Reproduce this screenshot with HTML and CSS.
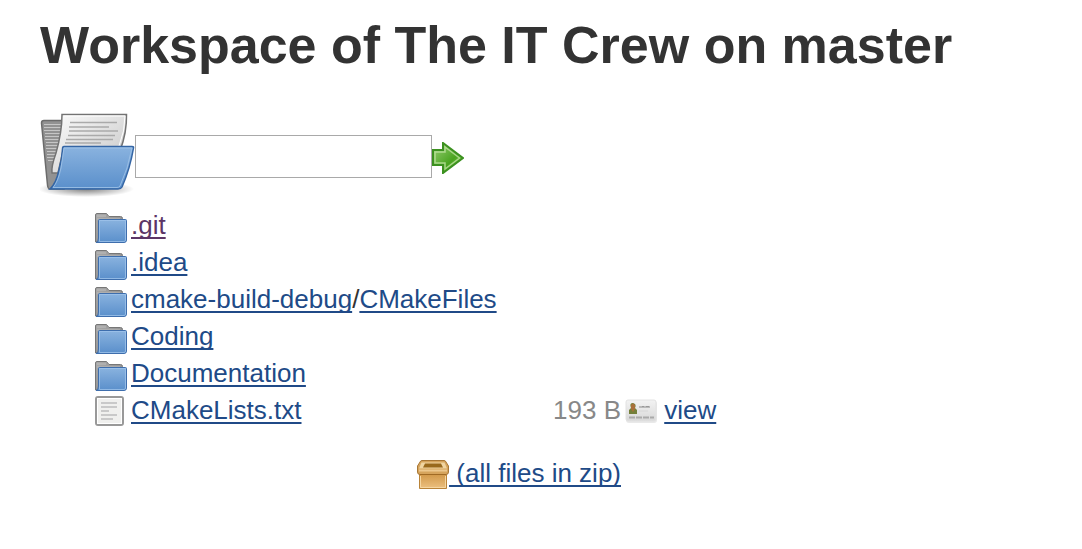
FILE: index.html
```html
<!DOCTYPE html>
<html lang="en">
<head>
<meta charset="utf-8">
<title>Workspace of The IT Crew on master</title>
<link rel="stylesheet" href="styles.css">
</head>
<body>
<svg class="defs" width="0" height="0" aria-hidden="true">
  <defs>
    <linearGradient id="blue" x1="0" y1="0" x2="0" y2="1"><stop offset="0" stop-color="#8ab3df"/><stop offset="1" stop-color="#5a8fcb"/></linearGradient>
    <linearGradient id="grey" x1="0" y1="0" x2="1" y2="1"><stop offset="0" stop-color="#aaa"/><stop offset="1" stop-color="#858585"/></linearGradient>
    <linearGradient id="paper" x1="0" y1="0" x2="1" y2="1"><stop offset="0" stop-color="#fcfcfc"/><stop offset="1" stop-color="#c4c4c4"/></linearGradient>
    <linearGradient id="green" x1="0" y1="0" x2="1" y2="1"><stop offset="0" stop-color="#9bd078"/><stop offset=".6" stop-color="#4aa420"/><stop offset="1" stop-color="#80cc4c"/></linearGradient>
    <linearGradient id="card" x1="0" y1="0" x2="0" y2="1"><stop offset="0" stop-color="#f3f3f3"/><stop offset="1" stop-color="#d8d8d8"/></linearGradient>
    <linearGradient id="box" x1="0" y1="0" x2="0" y2="1"><stop offset="0" stop-color="#cf9544"/><stop offset="1" stop-color="#ecc080"/></linearGradient>
    <radialGradient id="shadow"><stop offset="0" stop-color="#000" stop-opacity=".5"/><stop offset="1" stop-color="#000" stop-opacity="0"/></radialGradient>
    <symbol id="folder" viewBox="0 0 32 32">
      <path d="M.5 31V4Q.5 2.500 2 2.500H11.500L14 5.500H25.500Q27.500 5.500 27.500 7.500V31Z" fill="url(#grey)" stroke="#777"/>
      <path d="M2 5H11M2 8H25" stroke="#bdbdbd" fill="none"/>
      <path d="M1 31.500Q3.500 31 3.500 27V9.500Q3.500 8.500 4.500 8.500H30.500Q31.500 8.500 31.500 9.500V29Q31.500 31.500 29 31.500Z" fill="url(#blue)" stroke="#3e6ead"/>
      <path d="M4.500 28V9.500H30.500V29Q30.500 30.500 29 30.500H4.500Z" fill="none" stroke="#9fc3ea" stroke-opacity=".8"/>
    </symbol>
  </defs>
</svg>
<main class="workspace">
  <h1 class="title">Workspace of The IT Crew on master</h1>
  <form class="path-form">
    <svg class="folder-large" viewBox="0 0 95 96" aria-hidden="true">
      <ellipse cx="46" cy="84" rx="48" ry="8" fill="url(#shadow)"/>
      <path d="M1.500 18Q1.500 15.500 4 15.500H24V84H10Q8 84 7.500 80Z" fill="#929292" stroke="#6b6b6b" stroke-width="1.500"/>
      <path d="M4 19.500H22M4 22.500H22M4 25.500H22M5 28.500H22M5 31.500H22M5 34.500H22M6 37.500H22M6 40.500H20M6 43.500H19M7 46.500H18M7 49.500H17M7 52.500H15M8 55.500H14" stroke="#c6c6c6"/>
      <path d="M22 9.500H86.500Q87 27 80 46H23L18 68H12Q11 62 16 48Q22 27 22 9.500Z" fill="url(#paper)" stroke="#737373" stroke-width="1.500"/>
      <path d="M23.500 11H85Q85 26 79 41" stroke="#fff" fill="none"/>
      <path d="M30 17.500H77M29 22H69M29 26H78M28 30.500H75M26 34.500H73M25 38H61" stroke="#aaa" stroke-width="1.500"/>
      <path d="M24 41.500H92Q94 41.500 93.500 43Q90 64 82 82Q81 84 78 84H10Q16 79 19 65Q22 54 22.500 44Q22.500 41.500 24 41.500Z" fill="url(#blue)" stroke="#3465a4" stroke-width="1.500"/>
      <path d="M13 82.500Q18 77 21 63L24 43H92Q88 64 80 81Q79 82.500 77 82.500Z" fill="none" stroke="#a4c5e9" stroke-opacity=".8"/>
    </svg>
    <div class="path-controls">
      <input class="path-input" type="text" aria-label="Path">
      <button class="go" type="submit" aria-label="Go">
        <svg class="icon" viewBox="0 0 32 32" aria-hidden="true">
          <path d="M1 8H11V1L31 16L11 31V23H1Z" fill="url(#green)" stroke="#3c9120" stroke-width="2"/>
          <path d="M3 21V10H13V5L27.500 16L13 27V21Z" fill="none" stroke="#c4e6a8" stroke-width="1.500" stroke-opacity=".75"/>
        </svg>
      </button>
    </div>
  </form>
  <table class="files">
    <tbody>
      <tr><td class="icon-cell"><svg class="icon" aria-hidden="true"><use href="#folder"/></svg></td><td class="name"><a class="link visited" href="#git">.git</a></td><td></td><td></td></tr>
      <tr><td class="icon-cell"><svg class="icon" aria-hidden="true"><use href="#folder"/></svg></td><td class="name"><a class="link" href="#idea">.idea</a></td><td></td><td></td></tr>
      <tr><td class="icon-cell"><svg class="icon" aria-hidden="true"><use href="#folder"/></svg></td><td class="name"><a class="link" href="#cmake-build-debug">cmake-build-debug</a>/<a class="link" href="#cmakefiles">CMakeFiles</a></td><td></td><td></td></tr>
      <tr><td class="icon-cell"><svg class="icon" aria-hidden="true"><use href="#folder"/></svg></td><td class="name"><a class="link" href="#coding">Coding</a></td><td></td><td></td></tr>
      <tr><td class="icon-cell"><svg class="icon" aria-hidden="true"><use href="#folder"/></svg></td><td class="name"><a class="link" href="#documentation">Documentation</a></td><td></td><td></td></tr>
      <tr>
        <td class="icon-cell"><svg class="icon" viewBox="0 0 32 32" aria-hidden="true">
          <rect x="1" y="1" width="27" height="28" rx="2" fill="#f0f0ee" stroke="#999" stroke-width="2"/>
          <rect x="2.500" y="2.500" width="24" height="25" fill="none" stroke="#fff"/>
          <path d="M6 7H22M6 11H22M6 15H14M6 19H22M6 23H18" stroke="#c9c9c9" stroke-width="2"/>
        </svg></td>
        <td class="name"><a class="link" href="#cmakelists">CMakeLists.txt</a></td>
        <td class="size">193 B</td>
        <td class="view"><a class="view-link" href="#view"><svg class="icon" viewBox="0 0 32 32" aria-hidden="true">
          <rect x="1" y="5" width="31" height="22" rx="3" fill="#e9e9e9"/>
          <rect x="1" y="4" width="30" height="21" rx="2" fill="url(#card)" stroke="#e2e2e2"/>
          <path d="M4 18V14L6 12Q4 7 8 7Q12 8 10 12L12 14V18Z" fill="#74803a"/>
          <path d="M6 9Q8 6 10 9V13L8 16L6 13Z" fill="#a9703a"/>
          <path d="M14 11H25" stroke="#bababa" stroke-width="2"/>
          <path d="M17 10.500H19M21 10.500H24" stroke="#999"/>
          <path d="M14 15H23" stroke="#d6d6d6"/>
          <path d="M4 21.500H29" stroke="#aaa" stroke-width="2" stroke-dasharray="6 1"/>
        </svg></a> <a class="link" href="#view">view</a></td>
      </tr>
    </tbody>
    <tfoot>
      <tr><td class="zip" colspan="3"><a class="link" href="#zip"><svg class="icon" viewBox="0 0 32 32" aria-hidden="true">
        <path d="M2.500 14H29.500V29.500H2.500Z" fill="url(#box)" stroke="#b98338"/>
        <path d="M3.500 17V28.500H28.500V17" fill="none" stroke="#f6d6a0"/>
        <path d="M3 3Q3.500 1.500 5 1.500H27Q28.500 1.500 29 3L31.500 7V13Q31.500 15.500 29 15.500H3Q.5 15.500 .5 13V7Z" fill="#d6a45c" stroke="#a87736"/>
        <path d="M4.500 3.500L2 9.500H30L27.500 3.500Z" fill="#f0d5a2"/>
        <path d="M8 4.500H24L26 8.500H6Z" fill="#99691c"/>
        <path d="M2 11.500H30" stroke="#edc88e" stroke-width="2"/>
        <path d="M3 15.500H29" stroke="#a06a24"/>
      </svg> (all files in zip)</a></td><td></td></tr>
    </tfoot>
  </table>
</main>
</body>
</html>
```
FILE: styles.css
```css
body {
  margin: 0;
  background: #fff;
  color: #333;
  font: 26px/30px "Liberation Sans", Arial, sans-serif;
}

.defs {
  position: absolute;
}

.workspace {
  padding: 15px 40px;
}

.title {
  margin: 0 0 30px;
  font-size: 52px;
  line-height: 60px;
}

.path-form {
  display: flex;
  align-items: center;
}

.folder-large {
  width: 95px;
  height: 96px;
}

.path-controls {
  display: flex;
  align-items: center;
  padding-top: 7px;
}

.path-input {
  box-sizing: border-box;
  width: 297px;
  height: 43px;
  margin: 0;
  padding: 2px 4px;
  border: 1px solid #a9a9a9;
  background: #fff;
  font: inherit;
}

.go {
  margin: 0;
  padding: 2px 0 0;
  border: 0;
  background: none;
}

.icon {
  display: inline-block;
  width: 32px;
  height: 32px;
  vertical-align: middle;
}

.go .icon {
  display: block;
}

.files {
  margin: 6px 0 0 55px;
  border-collapse: collapse;
}

.files td {
  height: 37px;
  padding: 0;
  white-space: nowrap;
  vertical-align: top;
}

.files .icon-cell {
  width: 36px;
  padding-top: 4px;
  height: 33px;
  line-height: 0;
}

.files .name {
  width: 386px;
  padding-top: 3px;
  height: 34px;
}

.files .size {
  width: 104px;
  padding-top: 3px;
  height: 34px;
  color: #888;
  text-align: right;
}

.files .view {
  padding: 3px 0 0 4px;
  height: 34px;
}

.files .zip {
  padding-top: 29px;
  text-align: right;
}

.link {
  color: #204a87;
  text-decoration: underline;
  text-decoration-thickness: 2px;
  text-underline-offset: 3px;
  text-decoration-skip-ink: none;
}

.visited {
  color: #5c3566;
}
```
